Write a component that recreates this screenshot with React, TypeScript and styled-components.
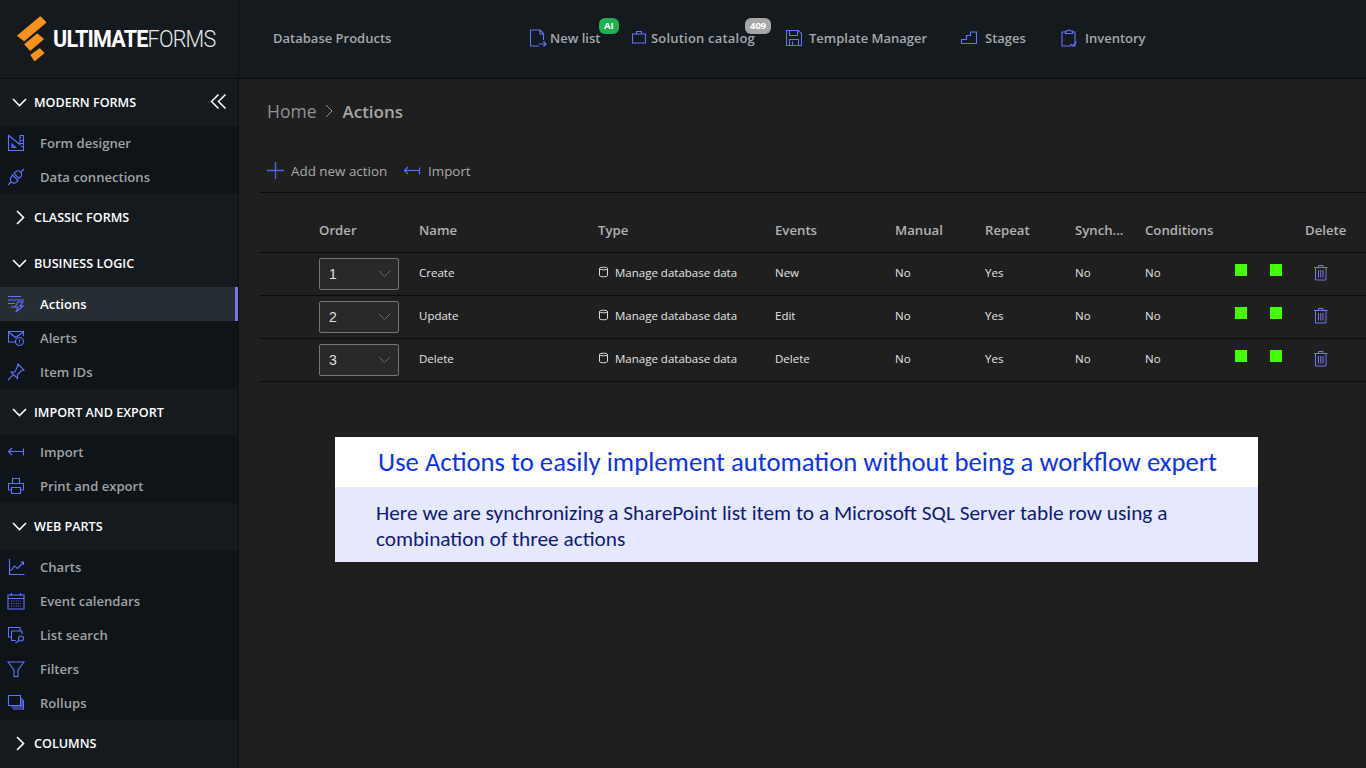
import React from "react";
import styled, { createGlobalStyle } from "styled-components";

const Global = createGlobalStyle`
  html, body { margin: 0; padding: 0; background: #1f1f1f; }
  body { font-family: "Open Sans", "Noto Sans", sans-serif; overflow: hidden; }
  * { box-sizing: border-box; }
`;

const Shell = styled.div`
  display: grid;
  grid-template-columns: 239px 1fr;
  grid-template-rows: 79px 1fr;
  width: 1366px;
  height: 768px;
  overflow: hidden;
`;
const LogoCell = styled.div`
  background: #151a1f;
  border-right: 1px solid #0d1013;
  border-bottom: 1px solid #0a0c0e;
  display: flex;
  align-items: center;
  padding-left: 17px;
  gap: 5px;
`;
const LogoText = styled.span`
  font-family: "Roboto", "Liberation Sans", sans-serif;
  color: #fff;
  font-size: 24.5px;
  font-weight: 700;
  letter-spacing: -0.9px;
  line-height: 1;
  transform: scaleX(0.88);
  transform-origin: left center;
  white-space: nowrap;
`;
const LogoLight = styled.span`
  font-weight: 300;
  color: #e6e6e6;
`;
const TopBar = styled.header`
  background: #151a1f;
  border-bottom: 1px solid #0a0c0e;
  display: flex;
  align-items: center;
  padding: 0 0 2px 34px;
`;
const AppTitle = styled.div`
  color: #a4a8ac;
  font-size: 13px;
  font-weight: 600;
  width: 256px;
  white-space: nowrap;
`;
const TopLink = styled.div<{ $w: number; $gap: number; $track?: number }>`
  position: relative;
  display: flex;
  align-items: center;
  gap: ${p => p.$gap}px;
  width: ${p => p.$w}px;
  color: #a4a8ac;
  font-size: 13px;
  font-weight: 600;
  letter-spacing: ${p => p.$track ?? 0}px;
  white-space: nowrap;
`;
const Badge = styled.span<{ $bg: string; $l: number }>`
  position: absolute;
  left: ${p => p.$l}px;
  top: -11px;
  height: 16px;
  padding: 0 5px;
  border-radius: 6px;
  background: ${p => p.$bg};
  color: #fff;
  font-size: 9.5px;
  font-weight: 700;
  letter-spacing: 0;
  line-height: 16px;
`;
const Side = styled.aside`
  background: #151a1f;
  border-right: 1px solid #0d1013;
  position: relative;
`;
const GroupHead = styled.div<{ $h: number }>`
  height: ${p => p.$h}px;
  display: flex;
  align-items: center;
  padding-left: 12px;
  gap: 7px;
  color: #fff;
  font-size: 12.6px;
  font-weight: 600;
  white-space: nowrap;
`;
const Chevron = styled.span`
  width: 15px;
  height: 15px;
  display: flex;
  align-items: center;
  justify-content: center;
`;
const Items = styled.div`
  background: #0f1419;
`;
const Item = styled.div<{ $active?: boolean }>`
  height: 34px;
  display: flex;
  align-items: center;
  padding-left: 7px;
  gap: 15px;
  font-size: 13.1px;
  font-weight: 600;
  color: ${p => (p.$active ? "#fff" : "#a0a2a5")};
  background: ${p => (p.$active ? "#272e33" : "transparent")};
  border-right: ${p => (p.$active ? "3px solid #7278ea" : "0")};
  white-space: nowrap;
`;
const Collapse = styled.span`
  position: absolute;
  left: 210px;
  top: 14px;
  display: flex;
`;
const Main = styled.main`
  background: #1f1f1f;
  padding-left: 20px;
  min-width: 0;
`;
const Crumbs = styled.div`
  height: 64px;
  display: flex;
  align-items: center;
  padding: 0 0 0 8px;
  gap: 8px;
  font-size: 17.5px;
  color: #8f9295;
`;
const CrumbNow = styled.span`
  font-weight: 600;
  font-size: 17px;
  color: #a6a6a6;
`;
const Toolbar = styled.div`
  height: 50px;
  padding: 6px 0 0 8px;
  display: flex;
  align-items: center;
  font-size: 13.4px;
  color: #a8aaac;
  border-bottom: 1px solid #0c0c0c;
`;
const ToolBtn = styled.div<{ $gap: number; $w: number }>`
  display: flex;
  align-items: center;
  gap: ${p => p.$gap}px;
  width: ${p => p.$w}px;
  white-space: nowrap;
`;
const Row = styled.div<{ $head?: boolean }>`
  display: grid;
  grid-template-columns: 60px 100px 179px 177px 120px 90px 90px 70px 90px 35px 35px 1fr;
  align-items: center;
  height: ${p => (p.$head ? 60 : 43)}px;
  border-bottom: 1px solid #0c0c0c;
  font-size: ${p => (p.$head ? 13.2 : 11.5)}px;
  font-weight: ${p => (p.$head ? 600 : 500)};
  color: ${p => (p.$head ? "#b0b2b4" : "#e4e4e4")};
  white-space: nowrap;
  padding-top: ${p => (p.$head ? 15 : 0)}px;
  padding-bottom: ${p => (p.$head ? 0 : 4)}px;
`;
const TypeCell = styled.div`
  display: flex;
  align-items: center;
  gap: 6px;
`;
const Select = styled.div`
  width: 80px;
  height: 32px;
  margin-top: 3px;
  border: 1px solid #757575;
  border-radius: 2px;
  background: #292929;
  display: flex;
  align-items: center;
  justify-content: space-between;
  padding: 0 7px 0 9px;
  font-size: 14px;
  color: #e0e0e0;
  font-family: "Liberation Sans", sans-serif;
`;
const Square = styled.span`
  display: block;
  width: 12px;
  height: 12px;
  background: #44ff00;
  margin-top: -5px;
`;
const TrashCell = styled.span`
  display: flex;
  padding-left: 8px;
  margin-top: 1px;
`;
const Banner = styled.section`
  width: 923px;
  margin: 55px 0 0 76px;
  font-family: "Carlito", "Lato", sans-serif;
`;
const BannerHead = styled.div`
  height: 50px;
  background: #fff;
  color: #0b33e8;
  font-size: 26.7px;
  line-height: 50px;
  text-align: center;
  padding-left: 2px;
  white-space: nowrap;
`;
const BannerBody = styled.div`
  height: 75px;
  background: #e6e8fd;
  color: #101a78;
  font-size: 21.3px;
  line-height: 26px;
  padding: 13px 60px 0 41px;
`;

const C = "#6073ff";
type IP = { children: React.ReactNode; size?: number; color?: string };
const Ico = ({ children, size = 18, color = C }: IP) => (
  <svg width={size} height={size} viewBox="0 0 18 18" fill="none" stroke={color} strokeWidth="1.100" style={{ flexShrink: 0 }}>
    {children}
  </svg>
);

const I = {
  design: <Ico><path d="M1.500 1.500v15h15V1.500h-3.500v9zM12.500 3.500h1.500M14 6.500h2.500M14 9.500h2.500M14 12.500h2.500M5 10v3.500h3.500z" /></Ico>,
  conn: <Ico><path d="M1 17l3.500-3.500M13.500 4.500L17 1M5.500 7l5.500 5.500-1.500 1.500a3.500 3.500 0 0 1-5-5zM7 5.500L8.500 4a3.500 3.500 0 0 1 5 5L12 10.500z" /></Ico>,
  actions: <Ico><path d="M1 1.500h13M1 5h16M1 8.500h7M4 12h4M11 7h5l-3 4h3l-7 6 2-5h-3z" /></Ico>,
  alerts: <Ico><path d="M9 13H1.500V2.500h15V7M1.500 3l7 5.500 8-5.500" /><circle cx="12.500" cy="12.500" r="4" /><path d="M12.500 10.300v2.600M12.500 14v.8" /></Ico>,
  pin: <Ico><path d="M1 17l5-5M11 1l6 6-3 1-3.500 3.500v4L4 9h4L10 4.500z" /></Ico>,
  imp: <Ico><path d="M16.500 5.500v7M16.500 8.500H1.500M5 5L1.500 8.500 5 12" /></Ico>,
  print: <Ico><path d="M5.500 6V1.500h7V6M4.500 13H1.500V6.500h15V13h-3M4.500 10.500h9v6h-9z" /></Ico>,
  chart: <Ico><path d="M2.500 1v15.500h15M3.500 13l4-5 3 2.500 6-6M13.500 4h3v3" /></Ico>,
  cal: <Ico><path d="M1 3h16v14H1zM1 6.500h16M4.500 1v3M13.500 1v3" /><path strokeDasharray="1 1.400" d="M4 9h10M4 11.500h10M4 14h10" /></Ico>,
  search: <Ico><path d="M13 5V1.500H1.500V11H5M4.500 5H15v3M4.500 5v9.500H9" /><circle cx="14" cy="12.500" r="2.500" /><path d="M12 14.500L8.500 17" /></Ico>,
  filter: <Ico><path d="M1 2h16l-6 8v6.500H7V10z" /></Ico>,
  rollup: <Ico><path d="M1.500 1.500h12v10h-12zM15 4v9H4M16.500 6v9H6" /></Ico>,
  newlist: <Ico><path d="M14.500 11V4.500L11 1H1.500v16H10M11 1v4h3.500M10 15h7M14.500 12.500L17 15l-2.500 2.500" /></Ico>,
  brief: <Ico><path d="M1.500 5h13v9h-13zM5.500 5V2.500h5V5" /></Ico>,
  save: <Ico><path d="M1.500 1.500h12l3 3v12h-15zM4.500 1.500v5h8v-5M4.500 16.500v-6h9v6M7.500 12.500v4" /></Ico>,
  stages: <Ico><path d="M1.500 14.500v-4h5v-4h4V3H16.500v11.500z" /></Ico>,
  clip: <Ico><path d="M5 3H2v14h9M13 17h2V3h-3M5.500 4.500V2h2l1-1h1l1 1h2v2.500zM10.500 15l2 2 4-4" /></Ico>,
};

const Down = () => (
  <svg width="15" height="15" viewBox="0 0 15 15" fill="none" stroke="#fff" strokeWidth="1.600"><path d="M1 4l6.500 6.500L14 4" /></svg>
);
const Right = () => (
  <svg width="15" height="15" viewBox="0 0 15 15" fill="none" stroke="#fff" strokeWidth="1.600"><path d="M5 1l6.500 6.500L5 14" /></svg>
);

const Logo = () => (
  <svg width="33" height="48" viewBox="0 0 33 48" fill="#f7931e" stroke="#f7931e" strokeWidth="1.500" strokeLinejoin="round">
    <path d="M1 20.500L24.500 .8 30 6.500 7.500 25.500z" />
    <path d="M8.500 29.500L21.300 19 27.500 24 14 35.500z" />
    <path d="M15 41L23.700 34.500 28 38.700 18.500 46.500z" />
  </svg>
);

const Group = ({ title, open = true, h = 47, children }: { title: string; open?: boolean; h?: number; children?: React.ReactNode }) => (
  <>
    <GroupHead $h={h}><Chevron>{open ? <Down /> : <Right />}</Chevron>{title}</GroupHead>
    {children && <Items>{children}</Items>}
  </>
);

const Trash = () => (
  <svg width="16" height="17" viewBox="0 0 16 17" fill="none" stroke="#7478ea" strokeWidth="1">
    <path d="M1 3.500h13.500M5.500 3.500V1.500h4.500v2M2.500 3.500v12.500h10.500V3.500M5.500 6v7.500M7.750 6v7.500M10 6v7.500" />
  </svg>
);
const Db = () => (
  <svg width="11" height="12" viewBox="0 0 11 12" fill="none" stroke="#dcdcdc" strokeWidth="1">
    <path d="M1.500 2.500v7c0 1.700 8 1.700 8 0v-7M1.500 2.500c0-1.700 8-1.700 8 0s-8 1.700-8 0z" />
  </svg>
);
const SelChev = () => (
  <svg width="13" height="8" viewBox="0 0 13 8" fill="none" stroke="#6a6a6a" strokeWidth="1"><path d="M1 1l5.500 5.500L12 1" /></svg>
);

const rows = [["1", "Create", "New"], ["2", "Update", "Edit"], ["3", "Delete", "Delete"]];

export default function App() {
  return (
    <Shell>
      <Global />
      <LogoCell>
        <Logo />
        <LogoText>ULTIMATE<LogoLight>FORMS</LogoLight></LogoText>
      </LogoCell>
      <TopBar>
        <AppTitle>Database Products</AppTitle>
        <TopLink $w={102} $gap={3}>{I.newlist}New list<Badge $bg="#21b04f" $l={70}>AI</Badge></TopLink>
        <TopLink $w={154} $gap={2} $track={0.2}>{I.brief}Solution catalog<Badge $bg="#a6a6a6" $l={114}>409</Badge></TopLink>
        <TopLink $w={175} $gap={6}>{I.save}Template Manager</TopLink>
        <TopLink $w={100} $gap={7}>{I.stages}Stages</TopLink>
        <TopLink $w={110} $gap={7}>{I.clip}Inventory</TopLink>
      </TopBar>
      <Side>
        <Collapse>
          <svg width="18" height="18" viewBox="0 0 18 18" fill="none" stroke="#fff" strokeWidth="1.500"><path d="M8.500 1.500L1.500 8.500l7 7M15.500 1.500l-7 7 7 7" /></svg>
        </Collapse>
        <Group title="MODERN FORMS">
          <Item>{I.design}Form designer</Item>
          <Item>{I.conn}Data connections</Item>
        </Group>
        <Group title="CLASSIC FORMS" open={false} h={46} />
        <Group title="BUSINESS LOGIC">
          <Item $active>{I.actions}Actions</Item>
          <Item>{I.alerts}Alerts</Item>
          <Item>{I.pin}Item IDs</Item>
        </Group>
        <Group title="IMPORT AND EXPORT" h={46}>
          <Item>{I.imp}Import</Item>
          <Item>{I.print}Print and export</Item>
        </Group>
        <Group title="WEB PARTS">
          <Item>{I.chart}Charts</Item>
          <Item>{I.cal}Event calendars</Item>
          <Item>{I.search}List search</Item>
          <Item>{I.filter}Filters</Item>
          <Item>{I.rollup}Rollups</Item>
        </Group>
        <Group title="COLUMNS" open={false} />
      </Side>
      <Main>
        <Crumbs>
          Home
          <svg width="10" height="14" viewBox="0 0 10 14" fill="none" stroke="#8f9295" strokeWidth="1"><path d="M2 1l6 6-6 6" /></svg>
          <CrumbNow>Actions</CrumbNow>
        </Crumbs>
        <Toolbar>
          <ToolBtn $gap={7} $w={136}>
            <svg width="17" height="17" viewBox="0 0 17 17" stroke="#4f66f0" strokeWidth="1.300" fill="none"><path d="M8.500 0v17M0 8.500h17" /></svg>
            Add new action
          </ToolBtn>
          <ToolBtn $gap={7} $w={100}>{I.imp}Import</ToolBtn>
        </Toolbar>
        <Row $head>
          <span />
          <span>Order</span><span>Name</span><span>Type</span><span>Events</span><span>Manual</span>
          <span>Repeat</span><span>Synch...</span><span>Conditions</span><span /><span /><span>Delete</span>
        </Row>
        {rows.map(r => (
          <Row key={r[0]}>
            <span />
            <Select>{r[0]}<SelChev /></Select>
            <span>{r[1]}</span>
            <TypeCell><Db />Manage database data</TypeCell>
            <span>{r[2]}</span>
            <span>No</span><span>Yes</span><span>No</span><span>No</span>
            <Square /><Square />
            <TrashCell><Trash /></TrashCell>
          </Row>
        ))}
        <Banner>
          <BannerHead>Use Actions to easily implement automation without being a workflow expert</BannerHead>
          <BannerBody>Here we are synchronizing a SharePoint list item to a Microsoft SQL Server table row using a combination of three actions</BannerBody>
        </Banner>
      </Main>
    </Shell>
  );
}
